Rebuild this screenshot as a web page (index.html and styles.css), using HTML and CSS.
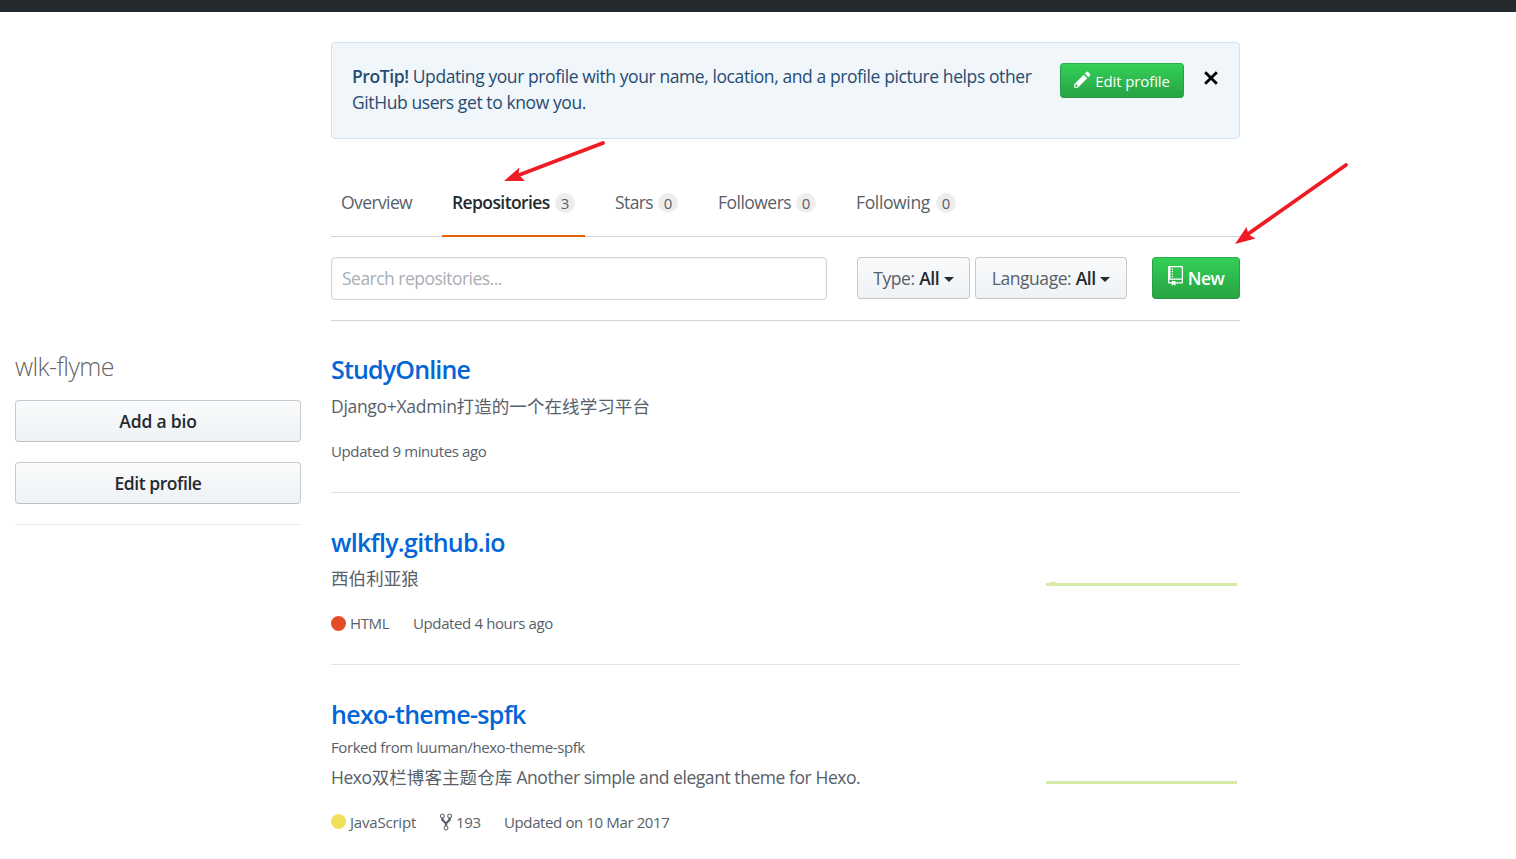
FILE: index.html
```html
<!DOCTYPE html>
<html lang="en">
<head>
<meta charset="utf-8">
<title>wlk-flyme / Repositories</title>
<link rel="stylesheet" href="styles.css">
</head>
<body>
<header class="topbar"></header>
<div class="page">
  <aside class="sidebar">
    <h1 class="username">wlk-flyme</h1>
    <button class="btn btn-block bio">Add a bio</button>
    <button class="btn btn-block">Edit profile</button>
  </aside>
  <main class="main">
    <section class="protip">
      <p class="protip-text"><strong>ProTip!</strong> Updating your profile with your name, location, and a profile picture helps other<br>GitHub users get to know you.</p>
      <button class="btn btn-green btn-small"><svg class="pencil" viewBox="0 0 14 16"><path d="M0 12v3h3l8-8-3-3-8 8zm3 2H1v-2h1v1h1v1zm10.3-9.3L12 6 9 3l1.300-1.300a.996.996 0 0 1 1.410 0l1.590 1.590c.39.390.39 1.020 0 1.410z"/></svg><span>Edit profile</span></button>
      <svg class="close" viewBox="0 0 12 12"><path d="M1 1l10 10M11 1L1 11"/></svg>
    </section>
    <nav class="tabs">
      <a class="tab t-overview"><span>Overview</span></a>
      <a class="tab t-repos selected"><span>Repositories</span><i class="counter">3</i></a>
      <a class="tab t-stars"><span>Stars</span><i class="counter">0</i></a>
      <a class="tab t-followers"><span>Followers</span><i class="counter">0</i></a>
      <a class="tab t-following"><span>Following</span><i class="counter">0</i></a>
    </nav>
    <div class="filters">
      <input class="search" type="text" placeholder="Search repositories...">
      <button class="btn select type"><span>Type:</span><b>All</b><i class="caret"></i></button>
      <button class="btn select language"><span>Language:</span><b>All</b><i class="caret"></i></button>
      <button class="btn btn-green new"><svg class="repo-icon" viewBox="0 0 12 16"><path d="M4 9H3V8h1v1zm0-3H3v1h1V6zm0-2H3v1h1V4zm0-2H3v1h1V2zm8-1v12c0 .55-.45 1-1 1H6v2l-1.500-1.500L3 16v-2H1c-.55 0-1-.45-1-1V1c0-.55.45-1 1-1h10c.55 0 1 .45 1 1zm-1 10H1v2h2v-1h3v1h5v-2zm0-10H2v9h9V1z"/></svg><span>New</span></button>
    </div>
    <ul class="repos">
      <li class="repo first">
        <h3 class="name n1">StudyOnline</h3>
        <p class="desc">Django+Xadmin<span class="cjk">打造的一个在线学习平台</span></p>
        <div class="meta">Updated 9 minutes ago</div>
      </li>
      <li class="repo second">
        <h3 class="name n2">wlkfly.github.io</h3>
        <div class="desc-row"><p class="desc"><span class="cjk">西伯利亚狼</span></p>
        <svg class="spark" viewBox="0 0 191 4"><path d="M0 1h4V0h6v1h181v3H8V3H7v1H0z"/></svg></div>
        <div class="meta"><i class="dot html"></i><span class="lang-html">HTML</span><span>Updated 4 hours ago</span></div>
      </li>
      <li class="repo third">
        <h3 class="name n3">hexo-theme-spfk</h3>
        <p class="fork">Forked from luuman/hexo-theme-spfk</p>
        <div class="desc-row"><p class="desc">Hexo<span class="cjk">双栏博客主题仓库</span> Another simple and elegant theme for Hexo.</p>
        <svg class="spark" viewBox="0 0 191 4"><path d="M0 1h191v3H0z"/></svg></div>
        <div class="meta"><i class="dot js"></i><span class="lang-js">JavaScript</span><svg class="fork-icon" viewBox="0 0 10 16"><path d="M8 1a1.993 1.993 0 0 0-1 3.720V6L5 8 3 6V4.720A1.993 1.993 0 0 0 2 1a1.993 1.993 0 0 0-1 3.720V6.500l3 3v1.780A1.993 1.993 0 0 0 5 15a1.993 1.993 0 0 0 1-3.720V9.500l3-3V4.720A1.993 1.993 0 0 0 8 1zM2 4.200C1.340 4.200.8 3.650.8 3c0-.65.55-1.200 1.200-1.200.65 0 1.200.55 1.200 1.200 0 .65-.55 1.200-1.200 1.200zm3 10c-.66 0-1.200-.55-1.200-1.200 0-.65.55-1.200 1.200-1.200.65 0 1.200.55 1.200 1.200 0 .65-.55 1.200-1.200 1.200zm3-10c-.66 0-1.200-.55-1.200-1.200 0-.65.55-1.200 1.200-1.200.65 0 1.200.55 1.200 1.200 0 .65-.55 1.200-1.200 1.200z"/></svg><span class="forks">193</span><span>Updated on 10 Mar 2017</span></div>
      </li>
    </ul>
  </main>
</div>
<svg class="arrows" viewBox="0 0 1516 859">
  <path class="shaft" d="M603 143L519 175M1346 165L1248 234"/>
  <path class="head" d="M504 181L519.500 167.500 518.500 174.500 525 181zM1235 244L1246.500 227 1248.500 234.500 1255.500 238.500z"/>
</svg>
</body>
</html>
```
FILE: styles.css
```css
* { box-sizing: border-box; }
body {
  margin: 0; height: 859px; overflow: hidden; background: #fff; color: #24292e;
  font: 17.500px/26px "Open Sans", "Noto Sans", "Noto Sans CJK SC", sans-serif;
  letter-spacing: -0.45px;
}
h1, h3, p, ul { margin: 0; padding: 0; }
li { list-style: none; }
i { font-style: normal; }
b, strong { font-weight: 600; }
svg { display: block; flex: none; fill: currentColor; }
.topbar { height: 12px; background: #24292e; }
.page { display: flex; gap: 30px; padding-left: 15px; }
.sidebar { width: 286px; height: 513px; padding-top: 339px; border-bottom: 1px solid #eaecef; }
.username { font-size: 25px; font-weight: 300; line-height: 31px; color: #666; letter-spacing: -0.6px; margin-bottom: 18px; }
.btn {
  display: flex; align-items: center; justify-content: center; height: 42px; padding: 0;
  font: inherit; font-weight: 600; letter-spacing: inherit; color: #24292e; white-space: nowrap;
  border: 1px solid #c8cbce; border-bottom-color: #bfc2c5; border-radius: 4px;
  background: linear-gradient(#fafbfc, #eff3f6 90%);
}
.btn-block { width: 286px; margin-bottom: 20px; }
.bio { letter-spacing: -0.2px; }
.btn-green { color: #fff; background: linear-gradient(#34d058, #28a745 90%); border-color: #29ad49 #28a047 #279343; }
.main { width: 909px; }
.protip {
  display: flex; height: 97px; margin-top: 30px; padding: 20px; color: #264c72;
  background: #f1f6fa; border: 1px solid #d0e4f5; border-radius: 4px;
}
.protip-text { width: 708px; white-space: nowrap; letter-spacing: -0.41px; }
.btn-small { width: 124px; height: 35px; font-size: 15px; font-weight: 400; gap: 4px; letter-spacing: -0.1px; }
.pencil { width: 17px; height: 19px; margin-top: -3px; }
.close { width: 14px; height: 14px; margin: 8px 0 0 20px; stroke: #000; stroke-width: 2.400; fill: none; }
.tabs { display: flex; gap: 20px; height: 68px; margin-top: 30px; border-bottom: 1px solid #d1d5da; color: #586069; }
.tab { display: flex; align-items: flex-start; justify-content: space-between; height: 68px; padding: 20px 10px 0; white-space: nowrap; }
.selected { color: #24292e; font-weight: 600; letter-spacing: -0.6px; border-bottom: 2px solid #e36209; }
.t-overview { width: 91px; letter-spacing: -0.6px; }
.t-repos { width: 143px; }
.t-stars { width: 83px; letter-spacing: -0.6px; }
.t-followers { width: 118px; letter-spacing: -0.52px; }
.t-following { width: 120px; letter-spacing: -0.36px; }
.counter { width: 20px; height: 20px; margin-top: 4px; border-radius: 10px; background: #ededed; color: #586069; font-size: 15px; font-weight: 400; line-height: 20px; text-align: center; letter-spacing: 0; }
.filters { display: flex; height: 84px; padding: 20px 0; border-bottom: 1px solid #d1d5da; }
.search { width: 496px; height: 43px; margin-right: 30px; padding: 0 10px 1px; font: inherit; letter-spacing: -0.52px; border: 1px solid #d1d5da; border-radius: 4px; box-shadow: inset 0 1px 2px rgba(27,31,35,.075); }
.search::placeholder { color: #a9afb5; opacity: 1; }
.select { gap: 4.500px; font-weight: 400; }
.select span { color: #586069; }
.caret { border: 5px solid transparent; border-top-color: #24292e; border-bottom: 0; margin-top: 3px; }
.type { width: 113px; margin-right: 5px; }
.language { width: 152px; margin-right: 25px; }
.new { width: 88px; gap: 5px; letter-spacing: -0.6px; }
.repo-icon { width: 15px; height: 20px; margin-top: -5px; }
.repo { height: 172px; padding-top: 34px; border-bottom: 1px solid #e1e4e8; }
.third { height: 195px; border: 0; }
.name { font-size: 25px; line-height: 31px; font-weight: 600; color: #0366d6; }
.n1 { letter-spacing: -0.83px; margin-top: -1px; margin-bottom: 8px; }
.n2 { letter-spacing: -0.7px; }
.n3 { letter-spacing: -0.68px; }
.desc { color: #586069; line-height: 26px; white-space: nowrap; margin-top: 7px; letter-spacing: -0.44px; }
.n1 + .desc { margin-top: 0; letter-spacing: -0.3px; }
.cjk { font-family: "Noto Sans CJK SC", sans-serif; font-weight: 400; letter-spacing: 0.08px; }
.desc-row { display: flex; justify-content: space-between; padding-right: 3px; }
.spark { width: 191px; height: 4px; margin-top: 24px; margin-bottom: -4px; fill: #d6eaa7; }
.third .spark { margin-top: 22px; }
.meta { display: flex; align-items: center; height: 22px; margin-top: 21px; font-size: 15px; line-height: 22px; color: #586069; letter-spacing: -0.38px; white-space: nowrap; }
.dot { width: 15px; height: 15px; border-radius: 50%; margin-right: 4px; }
.html { background: #e34c26; }
.js { background: #f1e05a; margin-top: -1px; }
.lang-html { width: 63px; }
.lang-js { width: 90px; letter-spacing: -0.2px; }
.fork-icon { width: 12px; height: 20px; margin-right: 4px; }
.forks { width: 48px; }
.fork { font-size: 15px; line-height: 22px; margin-top: 6px; color: #586069; letter-spacing: -0.42px; }
.third .desc { margin-top: 6px; }
.arrows { position: absolute; left: 0; top: 0; width: 1516px; height: 859px; pointer-events: none; }
.shaft { stroke: #ee1c24; stroke-width: 3.800; stroke-linecap: round; fill: none; }
.head { fill: #ee1c24; }
```
